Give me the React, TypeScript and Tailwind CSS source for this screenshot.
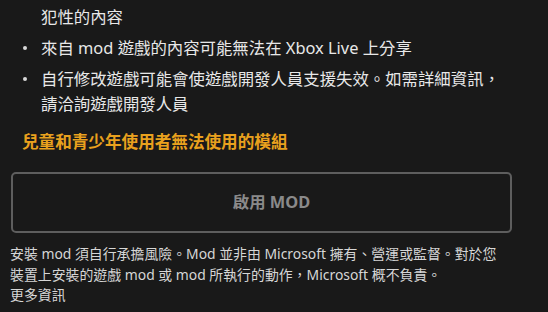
import React from 'react';

const font = "font-['Noto_Sans','Noto_Sans_CJK_TC',sans-serif]";

const items = [
  '來自 mod 遊戲的內容可能無法在 Xbox Live 上分享',
  '自行修改遊戲可能會使遊戲開發人員支援失效。如需詳細資訊，請洽詢遊戲開發人員',
];

const App: React.FC = () => {
  return (
    <div className={`w-[548px] h-[312px] overflow-hidden bg-[#191919] text-[#e8e8e8] ${font}`}>
      <ul className="pt-[4px] pl-[19px] pr-[40px] flex flex-col gap-[6px]">
        <li className="flex text-[16.4px] leading-[25px]">
          <span className="w-[22px] shrink-0" />
          <span>犯性的內容</span>
        </li>
        {items.map((text) => (
          <li key={text} className="flex text-[16.4px] leading-[25px]">
            <span className="w-[22px] shrink-0 flex justify-start pl-[4px] pt-[11px]">
              <span className="block h-[4px] w-[4px] rounded-full bg-[#d8d8d8]" />
            </span>
            <span>{text}</span>
          </li>
        ))}
      </ul>

      <h3 className="mt-[13px] pl-[22px] text-[16.6px] leading-[25px] font-bold text-[#e9a11e]">
        兒童和青少年使用者無法使用的模組
      </h3>

      <button className="mt-[18px] ml-[11px] w-[501px] h-[61px] rounded-[5px] border-2 border-[#5e5e5e] flex items-center justify-center pl-[20px] text-[16.4px] font-bold text-[#8a8a8a]">
        啟用 MOD
      </button>

      <div className="mt-[11px] pl-[10px] pr-[20px] text-[13.9px] leading-[20.5px] text-[#d6d6d6]">
        <p>
          安裝 mod 須自行承擔風險。Mod 並非由 Microsoft 擁有、營運或監督。對於您
          <br />
          裝置上安裝的遊戲 mod 或 mod 所執行的動作，Microsoft 概不負責。
        </p>
        <p>更多資訊</p>
      </div>
    </div>
  );
};

export default App;
